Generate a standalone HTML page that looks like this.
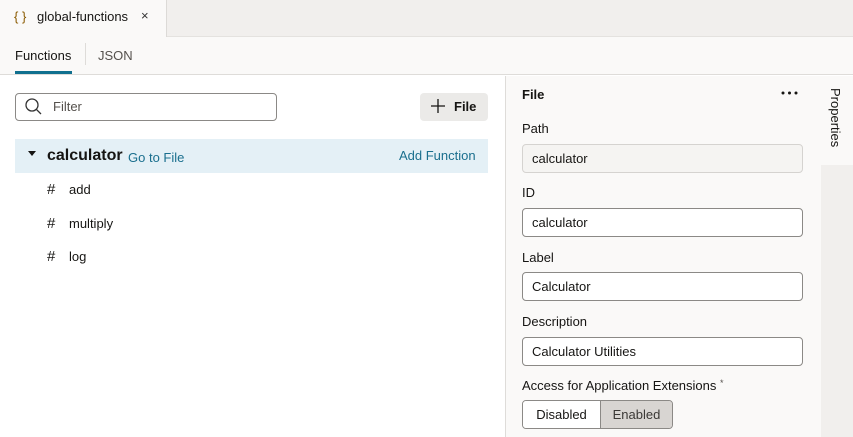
<!DOCTYPE html>
<html><head><style>
*{box-sizing:border-box;margin:0;padding:0}
body{width:853px;height:437px;overflow:hidden;background:#fff;font-family:"Liberation Sans",sans-serif;color:#161513;position:relative;font-size:13px}
.a{position:absolute}
.inp{position:absolute;left:522px;width:281px;height:29px;border:1px solid #8b8986;border-radius:4px;background:#fff;padding:0 9px;line-height:27px;font-size:13px}
.lbl{position:absolute;left:522px;font-size:13px;color:#161513}
</style></head><body>
<div class="a" style="left:0;top:0;width:853px;height:37px;background:#f1efed;border-bottom:1px solid #e4e2df"></div>
<div class="a" style="left:0;top:0;width:167px;height:38px;background:#faf9f8;border-right:1px solid #dcdad7"></div>
<div class="a" style="left:14px;top:9px;font-size:13px;color:#8a5a00">{ }</div>
<div class="a" style="left:37px;top:9px;font-size:13px">global-functions</div>
<div class="a" style="left:141px;top:8px;font-size:13px;color:#333">×</div>
<div class="a" style="left:0;top:37px;width:853px;height:38px;background:#faf9f8;border-bottom:1px solid #dedcd9"></div>
<div class="a" style="left:15px;top:48px;font-size:13px">Functions</div>
<div class="a" style="left:15px;top:71px;width:57px;height:3px;background:#10708f"></div>
<div class="a" style="left:85px;top:43px;width:1px;height:22px;background:#dedcd9"></div>
<div class="a" style="left:98px;top:48px;font-size:13px;color:#55514d">JSON</div>

<div class="a" style="left:15px;top:93px;width:262px;height:28px;border:1px solid #8b8986;border-radius:4px"></div>
<svg class="a" style="left:24px;top:97px" width="20" height="18"><circle cx="8" cy="8" r="6" fill="none" stroke="#333" stroke-width="1.3"/><line x1="12.3" y1="12.3" x2="17" y2="17" stroke="#333" stroke-width="1.3"/></svg>
<div class="a" style="left:53px;top:99px;color:#55514d">Filter</div>
<div class="a" style="left:420px;top:93px;width:68px;height:28px;background:#ebeae8;border-radius:4px"></div>
<svg class="a" style="left:430px;top:98px" width="16" height="16"><path d="M8 1v14M1 8h14" stroke="#161513" stroke-width="1.3"/></svg>
<div class="a" style="left:454px;top:99px;font-weight:bold;font-size:13px">File</div>

<div class="a" style="left:15px;top:139px;width:473px;height:34px;background:#e4f0f6"></div>
<svg class="a" style="left:28px;top:151px" width="8" height="6"><path d="M0 0h8L4 5z" fill="#161513"/></svg>
<div class="a" style="left:47px;top:147px;font-size:16px;font-weight:bold">calculator</div>
<div class="a" style="left:128px;top:150px;color:#1a6f8e">Go to File</div>
<div class="a" style="left:399px;top:148px;color:#1a6f8e">Add Function</div>
<div class="a" style="left:47px;top:181px;font-size:15px">#</div><div class="a" style="left:69px;top:182px">add</div>
<div class="a" style="left:47px;top:215px;font-size:15px">#</div><div class="a" style="left:69px;top:216px">multiply</div>
<div class="a" style="left:47px;top:248px;font-size:15px">#</div><div class="a" style="left:69px;top:249px">log</div>

<div class="a" style="left:505px;top:76px;width:316px;height:361px;background:#faf9f8;border-left:1px solid #dedcd9"></div>
<div class="a" style="left:821px;top:76px;width:32px;height:361px;background:#f1efed"></div>
<div class="a" style="left:821px;top:76px;width:32px;height:89px;background:#faf9f8"></div>
<div class="a" style="left:828px;top:88px;writing-mode:vertical-rl;font-size:13px">Properties</div>
<div class="a" style="left:522px;top:87px;font-weight:bold">File</div>
<svg class="a" style="left:781px;top:90px" width="18" height="6"><circle cx="2" cy="3" r="1.5" fill="#161513"/><circle cx="8.5" cy="3" r="1.5" fill="#161513"/><circle cx="15" cy="3" r="1.5" fill="#161513"/></svg>
<div class="lbl" style="top:121px">Path</div>
<div class="inp" style="top:144px;background:#f5f4f2;border-color:#d5d3d0">calculator</div>
<div class="lbl" style="top:185px">ID</div>
<div class="inp" style="top:208px">calculator</div>
<div class="lbl" style="top:250px">Label</div>
<div class="inp" style="top:272px">Calculator</div>
<div class="lbl" style="top:314px">Description</div>
<div class="inp" style="top:337px">Calculator Utilities</div>
<div class="lbl" style="top:378px">Access for Application Extensions <span style="font-size:9px;vertical-align:top;color:#55514d">*</span></div>
<div class="a" style="left:522px;top:400px;width:151px;height:29px;border:1px solid #8b8986;border-radius:4px;overflow:hidden;display:flex">
<div style="width:77px;text-align:center;line-height:27px;background:#fff">Disabled</div>
<div style="flex:1;text-align:center;line-height:27px;background:#d8d5d2;border-left:1px solid #8b8986;color:#3b3936">Enabled</div></div>
</body></html>
